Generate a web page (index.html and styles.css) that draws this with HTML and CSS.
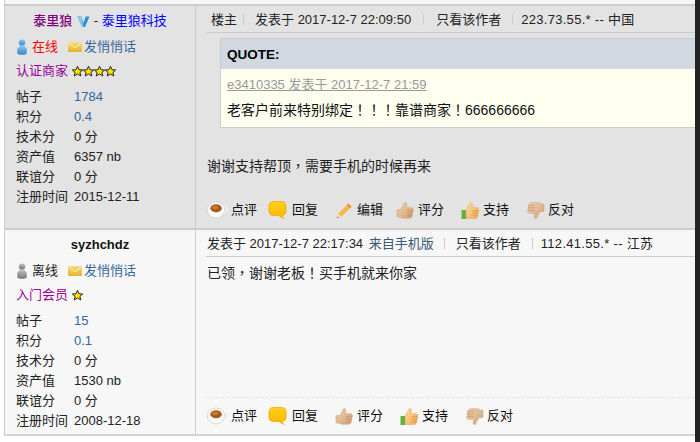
FILE: index.html
```html
<!DOCTYPE html>
<html lang="zh-CN">
<head>
  <meta charset="UTF-8" />
  <title>帖子</title>
  <link rel="stylesheet" href="styles.css">
</head>
<body>

  <!-- shared icons -->
  <svg class="defs" width="0" height="0">
    <defs>
      <linearGradient id="blueG" x1="0" y1="0" x2="0" y2="1"><stop offset="0" stop-color="#8cc4ee"/><stop offset="1" stop-color="#3a86cc"/></linearGradient>
      <linearGradient id="grayG" x1="0" y1="0" x2="0" y2="1"><stop offset="0" stop-color="#c4c4c0"/><stop offset="1" stop-color="#77776f"/></linearGradient>
      <linearGradient id="goldG" x1="0" y1="0" x2="0" y2="1"><stop offset="0" stop-color="#f8dc80"/><stop offset="1" stop-color="#e8b030"/></linearGradient>
      <linearGradient id="bubbleG" x1="0" y1="0" x2="0" y2="1"><stop offset="0" stop-color="#ffd21a"/><stop offset="1" stop-color="#ffb400"/></linearGradient>
      <linearGradient id="handG" x1="0" y1="0" x2="1" y2="1"><stop offset="0" stop-color="#f0d4b0"/><stop offset="1" stop-color="#cf9f74"/></linearGradient>
      <linearGradient id="handO" x1="0" y1="0" x2="1" y2="1"><stop offset="0" stop-color="#ffe0a8"/><stop offset="1" stop-color="#f0a850"/></linearGradient>
      <symbol id="i-star" viewBox="0 0 11 11"><path d="M5.500.3l1.500 3.400 3.700.3-2.800 2.400.9 3.600-3.300-2-3.300 2 .9-3.600L.3 4l3.700-.3z" fill="#ffe100" stroke="#111" stroke-width=".9"/></symbol>
      <symbol id="i-mail" viewBox="0 0 14 10"><rect x="0" y="0" width="14" height="10" rx="1" fill="url(#goldG)"/><path d="M.5.8L7 6l6.500-5.200" fill="none" stroke="#fbeebc" stroke-width="1"/></symbol>
      <symbol id="i-user" viewBox="0 0 10 16"><circle cx="5" cy="3.600" r="3.200"/><path d="M2.800 6.500h4.400l.8 1.600c1.300.6 1.800 1.600 1.800 3V14c0 1-1.600 1.800-4.800 1.800S.2 15 .2 14v-2.900c0-1.400.5-2.400 1.800-3z"/></symbol>
      <symbol id="i-cup" viewBox="0 0 22 18"><ellipse cx="9.500" cy="9" rx="9.200" ry="8.400" fill="#fafaf7" stroke="#cfcfc9" stroke-width=".8"/><path d="M17 5.500c3.500-.8 5 1.500 3.800 3.700-1 1.800-3.300 2.800-5 3" fill="none" stroke="#efefea" stroke-width="1.800"/><ellipse cx="9.500" cy="7.200" rx="6" ry="4.200" fill="#a8591a"/><ellipse cx="8.500" cy="6.300" rx="3.200" ry="1.900" fill="#c77a30"/></symbol>
      <symbol id="i-bubble" viewBox="0 0 18 18"><path d="M5 .5h8c3 0 4.500 1.500 4.500 4.500v5c0 3-1.500 4.500-4.500 4.500h-.5l3 3-5.500-3H5C2 14.500.5 13 .5 10V5C.5 2 2 .5 5 .5z" fill="url(#bubbleG)" stroke="#f5a800" stroke-width=".8"/></symbol>
      <symbol id="i-pencil" viewBox="0 0 17 17"><path d="M.8 16.200l1.400-4.600L12.300 1.500l3.200 3.200L5.400 14.800z" fill="#f8b84a"/><path d="M12.300 1.500l3.200 3.200-1.500 1.500-3.200-3.200z" fill="#ee8f3a"/><path d="M.8 16.200l1.400-4.600 3.200 3.200z" fill="#f6e2c0"/><path d="M.8 16.200l.6-2 1.400 1.400z" fill="#a06a3a"/></symbol>
      <symbol id="i-up" viewBox="0 0 18 17"><path d="M8.300.6c1.500-.4 2.300.7 2 2.200l-.5 2.900h5.100c1.600 0 2.200 1 1.900 2.200l-1 5.500c-.3 1.700-1.200 2.800-3 2.800H6.500c-1.500 0-2.300-.6-3-1.200H1.200c-.5 0-.7-.3-.7-.7V8.300c0-.4.200-.7.700-.7h3.300z" fill="url(#handG)" stroke="#c99a6e" stroke-width=".5"/><path d="M10.500 8.700h6M10.500 11.200h5.500M10.500 13.700h5" stroke="#bd8a5e" stroke-width=".7" fill="none"/></symbol>
      <symbol id="i-support" viewBox="0 0 18 17"><rect x="0" y="8" width="5" height="9" fill="#62b33c"/><path d="M8.800.6c1.500-.4 2.300.7 2 2.200l-.5 2.900h5c1.600 0 2.200 1 1.900 2.200l-1 5.500c-.3 1.700-1.200 3.200-3 3.200H7c-1.500 0-2.500-.8-2.500-2.200V8.300z" fill="url(#handO)" stroke="#e09a48" stroke-width=".5"/><path d="M11 8.700h6M11 11.200h5.500M11 13.700h5" stroke="#d88c3e" stroke-width=".7" fill="none"/></symbol>
      <symbol id="i-down" viewBox="0 0 18 17"><path d="M9.700 16.400c-1.500.4-2.300-.7-2-2.200l.5-2.900H3.100c-1.600 0-2.200-1-1.900-2.200l1-5.500C2.500 1.900 3.400.8 5.200.8h6.300c1.500 0 2.300.6 3 1.200h2.300c.5 0 .7.300.7.700v6c0 .4-.2.700-.7.700h-3.300z" fill="url(#handG)" stroke="#c99a6e" stroke-width=".5"/><path d="M2 3.300h6M2 5.800h6M2 8.300h6" stroke="#bd8a5e" stroke-width=".7" fill="none"/></symbol>
    </defs>
  </svg>

  <div class="page">
    <div class="top-strip"></div>

    <!-- post 1 -->
    <div class="post post-dark">
      <div class="author">
        <div class="name-row">
          <span class="name-vendor">泰里狼</span>
          <svg class="badge-v" width="13" height="13" viewBox="0 0 13 13"><path d="M.5 1.500h3.800L6.500 8l2.200-6.500h3.800L8 12H5z" fill="#2f8fd0"/><path d="M4.300 1.500H.5L5 12h1.500z" fill="#8fc8ec"/></svg>
          <span> - </span><span class="name-shop">泰里狼科技</span>
        </div>
        <div class="status-row">
          <svg class="ic-user" width="10" height="16" fill="url(#blueG)"><use href="#i-user"/></svg>
          <span class="online">在线</span>
          <svg class="ic-mail" width="14" height="10"><use href="#i-mail"/></svg>
          <a class="link">发悄悄话</a>
        </div>
        <div class="rank-row">
          <span class="rank">认证商家</span>
          <span class="stars">
            <svg width="11" height="11"><use href="#i-star"/></svg>
            <svg width="11" height="11"><use href="#i-star"/></svg>
            <svg width="11" height="11"><use href="#i-star"/></svg>
            <svg width="11" height="11"><use href="#i-star"/></svg>
          </span>
        </div>
        <dl class="stats">
          <dt>帖子</dt><dd class="num">1784</dd>
          <dt>积分</dt><dd class="num">0.4</dd>
          <dt>技术分</dt><dd>0 分</dd>
          <dt>资产值</dt><dd>6357 nb</dd>
          <dt>联谊分</dt><dd>0 分</dd>
          <dt>注册时间</dt><dd>2015-12-11</dd>
        </dl>
      </div>

      <div class="content">
        <div class="post-head head-first">
          <span>楼主</span><i class="sep sep-a"></i>
          <span>发表于 2017-12-7 22:09:50</span><i class="sep sep-wide"></i>
          <span>只看该作者</span><i class="sep sep-b"></i>
          <span class="ip">223.73.55.* -- 中国</span>
        </div>
        <div class="quote">
          <div class="quote-title">QUOTE:</div>
          <div class="quote-body">
            <a class="quote-link">e3410335 发表于 2017-12-7 21:59</a>
            <p>老客户前来特别绑定<span class="punct" lang="zh-TW">！！！</span>靠谱商家<span class="punct" lang="zh-TW">！</span>666666666</p>
          </div>
        </div>
        <p class="message msg-first">谢谢支持帮顶<span class="punct" lang="zh-TW">，</span>需要手机的时候再来</p>
        <div class="actions">
          <span class="act act-tight"><svg class="ic-cup" width="22" height="18"><use href="#i-cup"/></svg>点评</span>
          <span class="act"><svg width="20" height="18"><use href="#i-bubble"/></svg>回复</span>
          <span class="act act-tight"><svg class="ic-shift" width="20" height="17"><use href="#i-pencil"/></svg>编辑</span>
          <span class="act"><svg class="ic-shift" width="20" height="17"><use href="#i-up"/></svg>评分</span>
          <span class="act"><svg class="ic-shift" width="20" height="17"><use href="#i-support"/></svg>支持</span>
          <span class="act"><svg class="ic-shift" width="20" height="17"><use href="#i-down"/></svg>反对</span>
        </div>
      </div>
    </div>

    <!-- post 2 -->
    <div class="post">
      <div class="author">
        <div class="name-row"><strong>syzhchdz</strong></div>
        <div class="status-row">
          <svg class="ic-user" width="10" height="16" fill="url(#grayG)"><use href="#i-user"/></svg>
          <span>离线</span>
          <svg class="ic-mail" width="14" height="10"><use href="#i-mail"/></svg>
          <a class="link">发悄悄话</a>
        </div>
        <div class="rank-row">
          <span class="rank">入门会员</span>
          <span class="stars"><svg width="11" height="11"><use href="#i-star"/></svg></span>
        </div>
        <dl class="stats">
          <dt>帖子</dt><dd class="num">15</dd>
          <dt>积分</dt><dd class="num">0.1</dd>
          <dt>技术分</dt><dd>0 分</dd>
          <dt>资产值</dt><dd>1530 nb</dd>
          <dt>联谊分</dt><dd>0 分</dd>
          <dt>注册时间</dt><dd>2008-12-18</dd>
        </dl>
      </div>

      <div class="content">
        <div class="post-head">
          <span>发表于 2017-12-7 22:17:34 <a class="from">来自手机版</a></span><i class="sep"></i>
          <span>只看该作者</span><i class="sep sep-b"></i>
          <span class="ip">112.41.55.* -- 江苏</span>
        </div>
        <p class="message">已领<span class="punct" lang="zh-TW">，</span>谢谢老板<span class="punct" lang="zh-TW">！</span>买手机就来你家</p>
        <div class="actions actions-end">
          <span class="act act-tight"><svg class="ic-cup" width="22" height="18"><use href="#i-cup"/></svg>点评</span>
          <span class="act"><svg width="20" height="18"><use href="#i-bubble"/></svg>回复</span>
          <span class="act"><svg class="ic-shift" width="20" height="17"><use href="#i-up"/></svg>评分</span>
          <span class="act"><svg class="ic-shift" width="20" height="17"><use href="#i-support"/></svg>支持</span>
          <span class="act"><svg class="ic-shift" width="20" height="17"><use href="#i-down"/></svg>反对</span>
        </div>
      </div>
    </div>
  </div>

  <div class="edge"></div>
</body>
</html>
```

FILE: styles.css
```css
* {
  margin: 0;
  padding: 0;
  box-sizing: border-box;
}

html, body {
  height: 100%;
  overflow: hidden;
}

body {
  display: flex;
  background: #fff;
  color: #222;
  font-family: "Liberation Sans", "Noto Sans CJK SC", sans-serif;
  font-size: 13px;
  line-height: 20px;
}

.defs {
  position: absolute;
}

.page {
  flex: 1;
  min-width: 0;
  padding-left: 4px;
}

.edge {
  width: 5px;
  background: #232323;
}

.top-strip {
  height: 4px;
  background: #f7f7f7;
  border-left: 1px solid #ccc;
}

.post {
  display: grid;
  grid-template-columns: 191px 1fr;
  background: #f7f7f7;
  border-top: 2px solid #ccc;
  border-left: 1px solid #ccc;
}

.post:last-child {
  border-bottom: 2px solid #d4d4d4;
}

.post-dark {
  background: #e3e3e3;
}

/* left column */
.author {
  padding: 5px 0 3px 11px;
  border-right: 1px solid #ccc;
}

.name-row {
  display: flex;
  justify-content: center;
  align-items: center;
  height: 20px;
  padding-right: 11px;
  white-space: pre;
}

.name-row strong {
  color: #111;
}

.name-vendor {
  color: #800080;
  font-weight: 500;
}

.name-shop {
  color: #0000ff;
}

.badge-v {
  margin: 0 0 0 5px;
}

.status-row {
  display: flex;
  align-items: center;
  height: 20px;
  margin-top: 6px;
  padding-left: 1px;
}

.ic-user {
  margin-right: 5px;
}

.ic-mail {
  margin: 0 2px 0 10px;
}

.online {
  color: #f00;
}

.link {
  color: #369;
}

.from {
  margin-left: 2px;
  color: #3b5a78;
}

.rank-row {
  display: flex;
  align-items: center;
  height: 20px;
  margin-top: 4px;
}

.rank {
  color: #909;
}

.stars {
  display: flex;
  margin-left: 4px;
}

.stats {
  display: grid;
  grid-template-columns: 58px 1fr;
  margin-top: 6px;
}

.stats .num {
  color: #369;
}

/* right column */
.content {
  display: flex;
  flex-direction: column;
  min-width: 0;
  padding-left: 10px;
}

.post-head {
  display: flex;
  align-items: center;
  height: 27px;
  padding: 1px 0 0 1px;
  border-bottom: 1px solid #ccc;
  white-space: pre;
}

.head-first {
  padding-left: 5px;
}

.ip {
  letter-spacing: .3px;
}

.sep {
  width: 1px;
  height: 11px;
  margin: 0 11px 0 10px;
  background: #ccc;
}

.sep-a {
  margin: 0 11px 0 6px;
}

.sep-wide {
  margin: 0 12px;
}

.sep-b {
  margin: 0 8px 0 11px;
}

.quote {
  margin: 5px 0 0 14px;
  border: 1px solid #ccc;
  border-right: none;
  background: #feffef;
}

.quote-title {
  height: 30px;
  padding-left: 6px;
  background: #d2d8e2;
  color: #000;
  font-size: 13.5px;
  font-weight: bold;
  line-height: 31px;
}

.quote-body {
  height: 58px;
  padding: 6px 0 0 6px;
}

.quote-link {
  display: block;
  color: #999;
  text-decoration: underline;
}

.quote-body p {
  margin-top: 5px;
  color: #111;
  font-size: 14px;
}

.message {
  margin-top: 6px;
  padding-left: 1px;
  color: #222;
  font-size: 14px;
}

.msg-first {
  margin: 28px 0 15px;
}

/* full width marks sit centred in the reference */
.punct {
  font-family: "Noto Sans CJK TC", sans-serif;
  line-height: 1;
}

.actions {
  display: flex;
  gap: 15px;
  align-items: center;
  height: 37px;
  padding-left: 1px;
  border-top: 1px dashed #e4e4e4;
  color: #111;
}

.actions-end {
  margin-top: auto;
}

.act {
  display: flex;
  align-items: center;
  gap: 5px;
  width: 50px;
  white-space: nowrap;
}

.act-tight {
  margin-right: -4px;
}

.ic-cup {
  margin-right: -2px;
}

.ic-shift {
  margin: 0 -2px 0 2px;
}
```
